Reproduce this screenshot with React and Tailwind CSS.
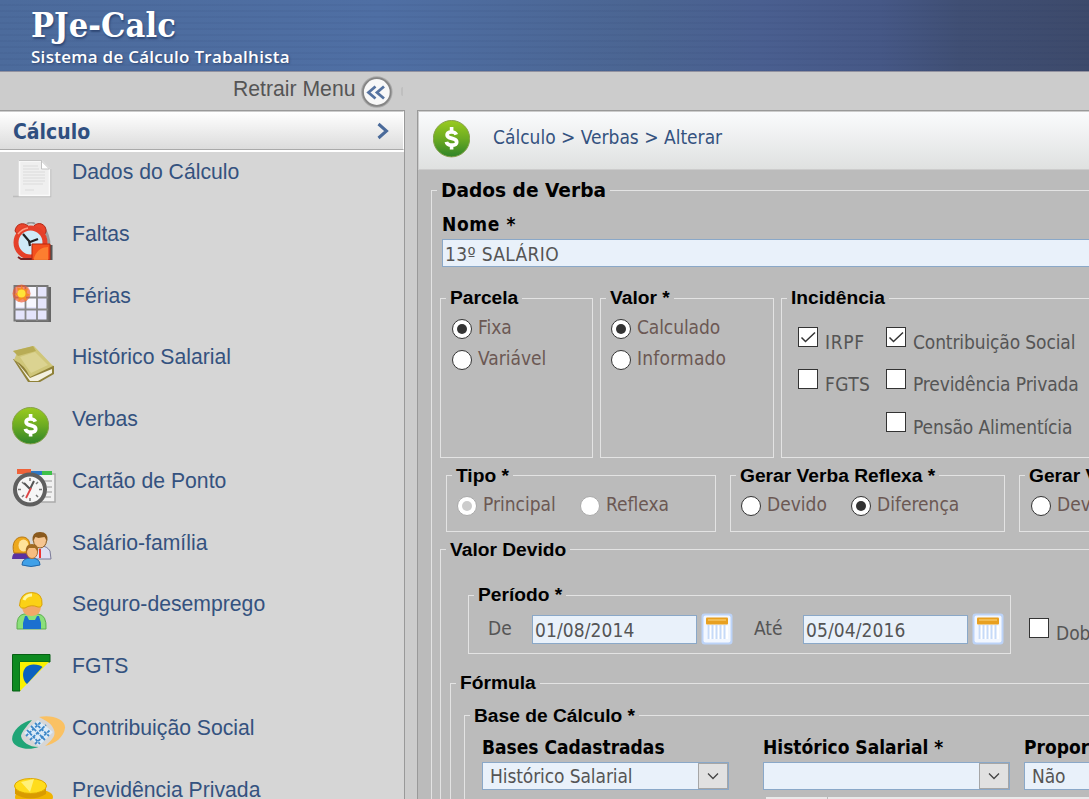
const TAHOMA = "font-['DejaVu_Sans_Condensed','DejaVu_Sans',sans-serif]";

function DollarIcon({ id }) {
  return (
    <svg width="37" height="38" viewBox="0 0 37 38">
      <defs>
        <linearGradient id={id} x1="0" y1="0" x2="0" y2="1">
          <stop offset="0" stopColor="#9acb1e" />
          <stop offset=".5" stopColor="#6cab22" />
          <stop offset="1" stopColor="#2f8428" />
        </linearGradient>
      </defs>
      <circle cx="18.5" cy="18.7" r="18.2" fill={`url(#${id})`} stroke="#86a04a" strokeWidth="1" />
      <path d="M23.300 14.700c-.6-1.700-2.300-2.700-4.900-2.700-2.500 0-4.300 1-4.300 2.900 0 4.700 9.600 2.300 9.600 7 0 2.200-2 3.300-4.900 3.300-3 0-5-1.100-5.400-3.300" fill="none" stroke="#fff" strokeWidth="3.700" />
      <path d="M18.600 7v5M18.600 25v4.500" stroke="#fff" strokeWidth="3.600" />
    </svg>
  );
}

function DocIcon() {
  return (
    <svg width="44" height="38" viewBox="0 0 44 38">
      <path d="M1 36.500h37.500V9" fill="none" stroke="#bdbdbd" strokeWidth="1.500" />
      <path d="M7.500 1h22l8 8v26.500h-30z" fill="#efefef" stroke="#fafafa" strokeWidth="1.500" />
      <path d="M7 .5h23" stroke="#bbb" strokeWidth=".8" />
      <path d="M29.500 1v8h8z" fill="#fff" stroke="#c2c2c2" />
      <path d="M11 6h15M11 9h16M11 12h22M11 15h22M11 18h22M11 21h22M11 24h20M13 30h9" stroke="#dcdcdc" strokeWidth="1.200" />
    </svg>
  );
}

function AlarmIcon() {
  return (
    <svg width="44" height="38" viewBox="0 0 44 38">
      <path d="M33 8q6 12 3 20" fill="none" stroke="#777" strokeWidth="3" opacity=".6" />
      <path d="M3 9C4 1 12 0 16 4L6 13zM22 4c4-5 13-2 12 6l-3 5z" fill="#ea452c" stroke="#b32a18" />
      <path d="M15 2q4-3 8 0" fill="none" stroke="#999" strokeWidth="2" />
      <circle cx="18.500" cy="20.500" r="14.500" fill="#cfeaf8" stroke="#e5402a" strokeWidth="5" />
      <path d="M6 12q4-5 10-6" fill="none" stroke="#ff9a80" strokeWidth="1.500" />
      <path d="M11 12l6 7 1 5M18 20l8-3" fill="none" stroke="#222" strokeWidth="2.200" />
      <path d="M6 35l3 2h11" stroke="#722" fill="none" strokeWidth="2" />
      <path d="M39 23v15" stroke="#555" strokeWidth="3" />
      <path d="M20 22h18v16H20z" fill="#f4501e" stroke="#b5260f" />
      <path d="M22 36c2-7 8-11 14-11v13H22z" fill="#ff9138" opacity=".7" />
    </svg>
  );
}

function GridIcon() {
  return (
    <svg width="44" height="38" viewBox="0 0 44 38">
      <path d="M4 3h35v35H4z" fill="#666" />
      <path d="M2.500 2h33v34.500h-33z" fill="#e4e4fb" stroke="#777" strokeWidth="2" />
      <path d="M4 3h20v20H4z" fill="#fff" opacity=".7" />
      <path d="M13.500 2v35M25 2v35M2 13.500h34M2 25.500h34" stroke="#888" strokeWidth="1.800" />
      <circle cx="9.500" cy="9.500" r="9" fill="#f0532d" opacity=".65" />
      <path d="M9.500 1l2 4.500 4.500-1-1.500 4.500 4 2-4.500 1.500.5 4.500-4-2-4 2.500v-5l-4-2 3.500-2.500-1-4.500 4 1z" fill="#f58a25" />
      <circle cx="9.500" cy="9.500" r="4" fill="#ffe338" />
    </svg>
  );
}

function BookIcon() {
  return (
    <svg width="44" height="38" viewBox="0 0 44 38">
      <path d="M1 14l15 23h12l14-8v-8z" fill="#8f8138" />
      <path d="M4 16l14 17 22-9v4l-14 8h-8z" fill="#f3f0df" />
      <path d="M1 6L22 1l19 20-23 11Q13 20 2 15l3-7z" fill="#cfc679" />
      <path d="M1 6l20-5 3 5L6 11z" fill="#b8ac55" />
      <path d="M8 12l15-5 13 13-17 8z" fill="#e0d99b" opacity=".7" />
    </svg>
  );
}

function TimeCardIcon() {
  return (
    <svg width="44" height="38" viewBox="0 0 44 38">
      <path d="M14 5h29v28H14z" fill="#f1f1f1" stroke="#aaa" strokeWidth="1.500" />
      <path d="M5 0h14v5H5z" fill="#ef6239" />
      <path d="M19 2h11v4H19z" fill="#2d78c8" />
      <path d="M30 2h10v4H30z" fill="#3fc14a" />
      <path d="M32 12h8M35 18h5M35 23h5M33 28h6" stroke="#c4c4c4" strokeWidth="2" />
      <circle cx="18" cy="20.500" r="15" fill="#f6f6f6" stroke="#5f5f5f" strokeWidth="4" />
      <path d="M18 9v3M18 29v3M6 20.500h3M27 20.500h3M10 13l2 2M26 13l-2 2M10 28l2-2M26 28l-2-2" stroke="#777" strokeWidth="1.500" />
      <path d="M12 14l6 6 4-8" fill="none" stroke="#555" strokeWidth="2" />
      <path d="M19 19l-5 10" stroke="#d44" strokeWidth="1.800" />
    </svg>
  );
}

function FamilyIcon() {
  return (
    <svg width="44" height="38" viewBox="0 0 44 38">
      <path d="M20 28v-9q3-4 9-4t9 5l1 8z" fill="#dedef2" stroke="#7b7b98" />
      <ellipse cx="28" cy="9.500" rx="6.500" ry="7.500" fill="#f5c591" stroke="#8a5a1e" />
      <path d="M20.500 10q-1-9 7.500-9t7.500 9l-3-4-6 1-3-1z" fill="#8a5a1e" />
      <path d="M0 28q0-6 5-7h10l3 7H0z" fill="#5a32a0" />
      <path d="M2 22C-1 12 4 6 10 6s9 4 8 16z" fill="#eda81c" stroke="#b87812" />
      <ellipse cx="11.500" cy="14.500" rx="5" ry="6" fill="#ffe39a" />
      <path d="M10 34q0-7 9-7t9 7q-9 3-18 0z" fill="#3fa0e8" stroke="#2367a8" />
      <ellipse cx="20" cy="21" rx="5.500" ry="6.500" fill="#f7bd80" stroke="#b07030" />
      <path d="M14 21q-1-8 6-8t6 8l-3-4h-6z" fill="#a06a22" />
      <path d="M28 18v9" stroke="#e33" strokeWidth="2" />
    </svg>
  );
}

function WorkerIcon() {
  return (
    <svg width="44" height="38" viewBox="0 0 44 38">
      <path d="M5 37q-1-14 7-15h14q9 1 8 15z" fill="#8be07a" stroke="#5fae50" />
      <path d="M11 37v-6l2-7h2l2 4h6l2-4h2l2 7v6z" fill="#1b70d0" />
      <path d="M10 13h19q0 11-9.500 11T10 13z" fill="#f2a869" />
      <path d="M7.500 14Q8 .5 19.500.5T30 13q-1 3-4 2-7-3-13 1-4 1-5.500-2z" fill="#fbd116" stroke="#d8a20c" />
      <path d="M12 8q2-5 8-5" stroke="#fff6a0" strokeWidth="3" fill="none" />
    </svg>
  );
}

function FlagIcon() {
  return (
    <svg width="44" height="38" viewBox="0 0 44 38">
      <path d="M.5.5H38V8H8v29H.5z" fill="#0d8a20" stroke="#075f14" />
      <path d="M8 8h29L8 37z" fill="#f9f200" />
      <path d="M30.500 13L15 30C9 25 9 10 22 10.500q6 0 8.500 2.500z" fill="#0b62c0" />
    </svg>
  );
}

function SocialIcon() {
  return (
    <svg width="54" height="38" viewBox="0 0 54 38">
      <path d="M20 4C8 6-2 18 .5 25c2 7 16 10 26 6C17 31 10 26 9 20c1-5 6-10 11-16z" fill="#20a577" />
      <path d="M27 1c12-3 27 2 26 11-1 9-10 16-20 18 7-6 11-10 9-16-2-6-7-9-15-13z" fill="#fac163" />
      <path d="M12 17L26 4l15 12-14 14z" fill="#dcebf7" />
      <path d="M15 14l13 14M19 10l14 14M23 7l14 13M14 20L29 6M18 24L34 9M23 28l15-14" stroke="#3c87c8" strokeWidth="1.800" strokeDasharray="3 1.200" />
    </svg>
  );
}

function CoinsIcon() {
  return (
    <svg width="44" height="38" viewBox="0 0 44 38">
      <path d="M0 21h41v17H0z" fill="#d49600" />
      <ellipse cx="22" cy="19" rx="19" ry="8" fill="#f0b400" />
      <path d="M3 8v8q16 9 31 0V8z" fill="#d99b00" />
      <ellipse cx="18.500" cy="8" rx="16" ry="7.500" fill="#ffdc1c" stroke="#dda600" />
      <path d="M9 4l9 10 4-13z" fill="#fff17a" />
    </svg>
  );
}

const MENU = [
  ["Dados do Cálculo", <DocIcon />],
  ["Faltas", <AlarmIcon />],
  ["Férias", <GridIcon />],
  ["Histórico Salarial", <BookIcon />],
  ["Verbas", <DollarIcon id="dollarMenu" />],
  ["Cartão de Ponto", <TimeCardIcon />],
  ["Salário-família", <FamilyIcon />],
  ["Seguro-desemprego", <WorkerIcon />],
  ["FGTS", <FlagIcon />],
  ["Contribuição Social", <SocialIcon />],
  ["Previdência Privada", <CoinsIcon />],
];

function Group({ title, className = "", legend = "", children }) {
  return (
    <fieldset className={`shrink-0 border border-[#e3e3e3] ${className}`}>
      <legend className={`ml-[5px] h-5 px-1 text-[19.2px] leading-5 font-bold whitespace-nowrap text-black font-['Liberation_Sans',sans-serif] ${legend}`}>
        {title}
      </legend>
      {children}
    </fieldset>
  );
}

function Radio({ label, checked, disabled, className = "" }) {
  return (
    <label className={`flex h-6 items-center gap-[6px] whitespace-nowrap text-[#6b5853] ${className}`}>
      <span className={`mt-[3px] flex size-5 shrink-0 items-center justify-center rounded-full border bg-white ${disabled ? "border-[#aaa]" : "border-[#333]"}`}>
        {checked && <span className={`size-[10px] rounded-full ${disabled ? "bg-[#ccc]" : "bg-[#333]"}`} />}
      </span>
      <span>{label}</span>
    </label>
  );
}

function Check({ label, checked, className = "" }) {
  return (
    <label className={`flex h-[30px] items-start gap-[7px] whitespace-nowrap text-[#555] ${className}`}>
      <span className="block size-5 shrink-0 border border-[#333] bg-white">
        {checked && (
          <svg width="18" height="18" viewBox="0 0 18 18" fill="none" stroke="#333" strokeWidth="1.500">
            <path d="M2.500 9.500l4 4L16 4.500" />
          </svg>
        )}
      </span>
      <span className="mt-[3px] leading-6">{label}</span>
    </label>
  );
}

function DateInput({ value }) {
  return (
    <div className="flex items-center gap-1">
      <div className="mt-px h-[29px] w-[165px] border border-[#8aa8c8] bg-[#e9f1fa] pl-[2px] leading-[28px] tracking-[0.1px]">{value}</div>
      <svg className="mt-px" width="32" height="32" viewBox="0 0 32 32">
        <rect x=".5" y=".5" width="31" height="31" rx="3" fill="#bcd3f8" />
        <rect x="2.500" y="2.500" width="27" height="27" rx="2" fill="#f2f7ff" />
        <path d="M6 13v13h21V13" fill="#fff" />
        <path d="M7.500 12v14M11.500 12v14M15.500 12v14M19.500 12v14M23.500 12v14" stroke="#c6daf8" strokeWidth="2" />
        <rect x="5" y="4.500" width="22" height="7" rx="1" fill="#e8a020" />
        <path d="M7 7h18" stroke="#f7c661" strokeWidth="1.500" />
      </svg>
    </div>
  );
}

function Select({ value }) {
  return (
    <div className="flex h-7 w-[247px] justify-between border border-[#8aa8c8] bg-[#e9f1fa] pl-[7px] leading-[27px] tracking-[-0.1px]">
      <span>{value}</span>
      <span className="flex h-[26px] w-[30px] items-center justify-center border border-[#a6a6a6] bg-[#e1e1e1]">
        <svg width="12" height="8" viewBox="0 0 12 8" fill="none" stroke="#444" strokeWidth="1.300">
          <path d="M1 1.500l5 5 5-5" />
        </svg>
      </span>
    </div>
  );
}

function Field({ label, value }) {
  return (
    <div className="w-[247px] shrink-0">
      <div className="h-[26px] leading-[22px] font-bold whitespace-nowrap text-black">{label}</div>
      <Select value={value} />
    </div>
  );
}

export default function App() {
  return (
    <div className={`flex h-[799px] w-[1089px] flex-col overflow-hidden bg-[#ccc] text-[19px] text-[#555] ${TAHOMA}`}>
      <header className="h-[72px] shrink-0 border-b border-[#9292a0] bg-[repeating-linear-gradient(180deg,transparent_0_4px,rgba(20,35,80,0.05)_4px_6px),linear-gradient(90deg,#4c6b9c_0px,#4f6fa4_380px,#4b6592_640px,#4a5f90_760px,#465886_880px,#404f74_960px,#3d4a6b_1089px)] pl-[31px] text-white">
        <div className="h-[46px] pt-[4px] text-[34px] leading-[42px] font-bold tracking-[0.1px] font-['DejaVu_Serif_Condensed','DejaVu_Serif',serif] [text-shadow:1px_2px_2px_#2f4875]">PJe-Calc</div>
        <div className="text-[17px] leading-[22px] font-semibold tracking-[0.27px] font-['Open_Sans',sans-serif] [text-shadow:1px_1px_2px_#2f4875]">Sistema de Cálculo Trabalhista</div>
      </header>

      <div className="flex h-[38px] shrink-0 items-start pl-[233px] font-['Liberation_Sans',sans-serif] text-[21.2px]">
        <span className="mt-[5px] w-[122px] leading-6 whitespace-nowrap">Retrair Menu</span>
        <svg className="mt-[4px] ml-[6px]" width="32" height="32" viewBox="0 0 32 32" fill="none">
          <circle cx="15.800" cy="16" r="14.500" stroke="#aaa" strokeWidth="2.500" />
          <circle cx="15.800" cy="16" r="13.800" fill="#f8f8f8" stroke="#858585" strokeWidth="1.800" />
          <path d="M14.500 10.500l-7 6 7 6M23 10.500l-7 6 7 6" stroke="#5673a0" strokeWidth="2.800" />
        </svg>
        <span className="mt-[15px] ml-2 h-[9px] w-[2px] rounded-l bg-[#bfbfbf]" />
      </div>

      <div className="flex h-[689px] shrink-0 gap-3">
        <aside className="flex w-[405px] shrink-0 flex-col border-t border-r border-[#999] bg-[#d6d6d6]">
          <div className="flex h-[39px] shrink-0 items-center justify-between border-t border-r border-b border-t-[#ccc] border-r-white border-b-[#aaa] bg-linear-to-b from-white to-[#dcdcdc] pr-[13px] pl-[13px]">
            <span className="mt-[5px] text-[21px] font-bold text-[#2f4f80]">Cálculo</span>
            <svg width="14" height="18" viewBox="0 0 14 18" fill="none" stroke="#4a6a9a" strokeWidth="3">
              <path d="M2.500 2l8 7-8 7" />
            </svg>
          </div>
          <div className="h-[2px] shrink-0 bg-white" />
          <nav className="flex flex-col pt-[8px] pl-3 font-['Liberation_Sans',sans-serif] text-[21.2px] text-[#34527f]">
            {MENU.map(([label, icon]) => (
              <div key={label} className="flex h-[61.75px] shrink-0 items-start">
                <span className="w-[60px] shrink-0">{icon}</span>
                <span className="leading-6 whitespace-nowrap">{label}</span>
              </div>
            ))}
          </nav>
        </aside>

        <main className="flex w-[700px] shrink-0 flex-col border-t border-l border-[#999] bg-[#bbb]">
          <div className="flex h-[59px] shrink-0 items-center border-t border-b border-l border-[#ccc] bg-linear-to-b from-[#fafbfd] to-[#dfe1e0] pl-[14px] text-[#34527f]">
            <span className="mt-[-4px]"><DollarIcon id="dollarMain" /></span>
            <span className="mt-[-6px] ml-[23px] whitespace-nowrap">Cálculo &gt; Verbas &gt; Alterar</span>
          </div>

          <fieldset className="mt-[10px] ml-[13px] h-[640px] w-[700px] shrink-0 border border-[#e3e3e3]">
            <legend className="ml-[5px] h-5 px-1 text-[18.600px] leading-[21px] font-bold whitespace-nowrap text-black font-['DejaVu_Sans',sans-serif]">Dados de Verba</legend>
            <div className="ml-[10px] mt-[12px] h-[27px] leading-6 font-bold tracking-[0.6px] text-black">Nome *</div>
            <div className="ml-[10px] h-7 border border-[#8aa8c8] bg-[#e9f1fa] pl-[2px] leading-7 tracking-[0.35px]">13º SALÁRIO</div>

            <div className="mt-[21px] ml-2 flex gap-[7px]">
              <Group title="Parcela" className="h-[170px] w-[153px]">
                <Radio label="Fixa" checked className="mt-[7px] ml-[11px]" />
                <Radio label="Variável" className="mt-[7px] ml-[11px]" />
              </Group>
              <Group title="Valor *" className="h-[170px] w-[174px]">
                <Radio label="Calculado" checked className="mt-[7px] ml-[10px] tracking-[-0.1px]" />
                <Radio label="Informado" className="mt-[7px] ml-[10px] tracking-[0.2px]" />
              </Group>
              <Group title="Incidência" className="h-[170px] w-[330px]">
                <div className="mt-[19px] ml-[16px] grid grid-cols-[88px_220px] gap-y-[12px]">
                  <Check label="IRPF" checked className="tracking-[0.7px]" />
                  <Check label="Contribuição Social" checked className="tracking-[-0.12px]" />
                  <Check label="FGTS" className="tracking-[0.4px]" />
                  <Check label="Previdência Privada" className="tracking-[-0.12px]" />
                  <span />
                  <Check label="Pensão Alimentícia" className="mt-px tracking-[-0.12px]" />
                </div>
              </Group>
            </div>

            <div className="mt-[7px] ml-[14px] flex gap-[14px]">
              <Group title="Tipo *" className="h-[67px] w-[270px]" legend="pt-px">
                <div className="mt-[7px] ml-[10px] flex">
                  <Radio label="Principal" checked disabled className="w-[123px]" />
                  <Radio label="Reflexa" disabled />
                </div>
              </Group>
              <Group title="Gerar Verba Reflexa *" className="h-[67px] w-[275px]" legend="pt-px">
                <div className="mt-[7px] ml-[10px] flex">
                  <Radio label="Devido" className="w-[110px]" />
                  <Radio label="Diferença" checked />
                </div>
              </Group>
              <Group title="Gerar Verba Principal *" className="h-[67px] w-[275px]" legend="pt-px">
                <div className="mt-[7px] ml-[11px] flex">
                  <Radio label="Devido" className="w-[110px]" />
                </div>
              </Group>
            </div>

            <Group title="Valor Devido" className="mt-[7px] ml-2 h-[400px] w-[690px]" legend="pt-px">
              <div className="mt-[26px] ml-[27px] flex gap-[18px]">
                <Group title="Período *" className="h-[69px] w-[543px]">
                  <div className="mt-[7px] ml-[19px] flex items-center">
                    <span className="w-[44px]">De</span>
                    <DateInput value="01/08/2014" />
                    <span className="ml-[21px] w-[49px]">Até</span>
                    <DateInput value="05/04/2016" />
                  </div>
                </Group>
                <div className="mt-[33px]"><Check label="Dobra" /></div>
              </div>
              <Group title="Fórmula" className="mt-[19px] ml-[9px] h-[300px] w-[660px]">
                <Group title="Base de Cálculo *" className="mt-[12px] ml-[13px] h-[200px] w-[640px]" legend="pt-px">
                  <div className="mt-[11px] ml-[17px] flex gap-[34px]">
                    <Field label="Bases Cadastradas" value="Histórico Salarial" />
                    <Field label="Histórico Salarial *" value="" />
                    <div className="ml-[-20px]"><Field label="Proporcionalizar *" value="Não" /></div>
                  </div>
                  <div className="mt-[7px] ml-[301px] flex h-6 gap-px bg-[#bbb]">
                    <div className="w-[61px] bg-[#e9e9e9]" />
                    <div className="grow bg-[#e9e9e9]" />
                  </div>
                </Group>
              </Group>
            </Group>
          </fieldset>
        </main>
      </div>
    </div>
  );
}
